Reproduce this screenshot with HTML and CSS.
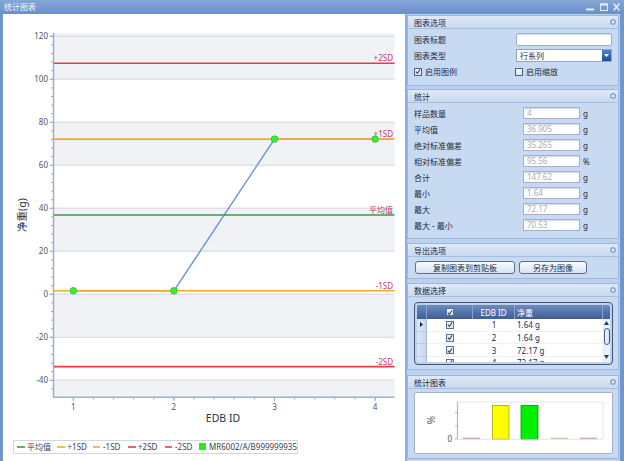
FILE: index.html
```html
<!DOCTYPE html>
<html lang="zh">
<head>
<meta charset="utf-8">
<title>统计图表</title>
<link rel="stylesheet" href="styles.css">
</head>
<body>
<div class="window">
  <div class="titlebar">
    <span class="title">统计图表</span>
    <svg class="winbtns" width="36" height="14" viewBox="0 0 36 14">
      <rect x="1" y="8.5" width="8" height="2" fill="#e4ebf6"/>
      <rect x="15.5" y="4" width="7" height="6.5" fill="none" stroke="#e4ebf6" stroke-width="1"/>
      <rect x="15" y="3.5" width="8" height="2" fill="#e4ebf6"/>
      <path d="M28.5 3.5 L34.5 10.5 M34.5 3.5 L28.5 10.5" stroke="#e4ebf6" stroke-width="1.6"/>
    </svg>
  </div>
  <div class="main">
    <div class="chart-pane">
      <svg class="chart" width="402" height="447" viewBox="3 14 402 447">
        <defs>
          <pattern id="ytick" patternUnits="userSpaceOnUse" x="0" y="35.8" width="10" height="8.6">
            <rect x="0" y="0" width="10" height="1" fill="#9ca8c0"/>
          </pattern>
          <pattern id="xtick" patternUnits="userSpaceOnUse" x="72.8" y="0" width="20.12" height="10">
            <rect x="0" y="0" width="1" height="10" fill="#9ca8c0"/>
          </pattern>
        </defs>
        <g fill="#f1f2f6">
          <rect x="54" y="33" width="340.5" height="46.3"/>
          <rect x="54" y="122.3" width="340.5" height="43"/>
          <rect x="54" y="208.3" width="340.5" height="43"/>
          <rect x="54" y="294.3" width="340.5" height="43"/>
          <rect x="54" y="380.3" width="340.5" height="16.7"/>
        </g>
        <g stroke="#dfe1e9" stroke-width="1.6">
          <line x1="54" y1="36.3" x2="394.5" y2="36.3"/>
          <line x1="54" y1="79.3" x2="394.5" y2="79.3"/>
          <line x1="54" y1="122.3" x2="394.5" y2="122.3"/>
          <line x1="54" y1="165.3" x2="394.5" y2="165.3"/>
          <line x1="54" y1="208.3" x2="394.5" y2="208.3"/>
          <line x1="54" y1="251.3" x2="394.5" y2="251.3"/>
          <line x1="54" y1="294.3" x2="394.5" y2="294.3"/>
          <line x1="54" y1="337.3" x2="394.5" y2="337.3"/>
          <line x1="54" y1="380.3" x2="394.5" y2="380.3"/>
        </g>
        <rect x="51" y="33" width="2" height="364" fill="url(#ytick)"/>
        <g stroke="#9ca8c0" stroke-width="1">
          <line x1="49.5" y1="36.3" x2="53" y2="36.3"/>
          <line x1="49.5" y1="79.3" x2="53" y2="79.3"/>
          <line x1="49.5" y1="122.3" x2="53" y2="122.3"/>
          <line x1="49.5" y1="165.3" x2="53" y2="165.3"/>
          <line x1="49.5" y1="208.3" x2="53" y2="208.3"/>
          <line x1="49.5" y1="251.3" x2="53" y2="251.3"/>
          <line x1="49.5" y1="294.3" x2="53" y2="294.3"/>
          <line x1="49.5" y1="337.3" x2="53" y2="337.3"/>
          <line x1="49.5" y1="380.3" x2="53" y2="380.3"/>
          <line x1="73.3" y1="397" x2="73.3" y2="401"/>
          <line x1="173.9" y1="397" x2="173.9" y2="401"/>
          <line x1="274.5" y1="397" x2="274.5" y2="401"/>
          <line x1="375.1" y1="397" x2="375.1" y2="401"/>
        </g>
        <rect x="54" y="397.5" width="340.5" height="2" fill="url(#xtick)"/>
        <line x1="53.5" y1="33" x2="53.5" y2="397.5" stroke="#a3afc6" stroke-width="1.5"/>
        <line x1="53" y1="397.2" x2="394.5" y2="397.2" stroke="#a3afc6" stroke-width="1.5"/>
        <g class="tick" text-anchor="end">
          <text x="48" y="39.3">120</text>
          <text x="48" y="82.3">100</text>
          <text x="48" y="125.3">80</text>
          <text x="48" y="168.3">60</text>
          <text x="48" y="211.3">40</text>
          <text x="48" y="254.3">20</text>
          <text x="48" y="297.3">0</text>
          <text x="48" y="340.3">-20</text>
          <text x="48" y="383.3">-40</text>
        </g>
        <g class="tick" text-anchor="middle">
          <text x="73.3" y="409.5">1</text>
          <text x="173.9" y="409.5">2</text>
          <text x="274.5" y="409.5">3</text>
          <text x="375.1" y="409.5">4</text>
        </g>
        <text class="axis-title" x="223" y="422" text-anchor="middle">EDB ID</text>
        <text class="axis-title" text-anchor="middle" transform="translate(25.5 215) rotate(-90)">净重(g)</text>

        <polyline points="73.3,290.8 173.9,290.8 274.5,139.1 375.1,139.1" fill="none" stroke="#7097cc" stroke-width="1.5"/>
        <line x1="54" y1="63.3" x2="394.5" y2="63.3" stroke="#ec3b3f" stroke-width="1.6"/>
        <line x1="54" y1="139.1" x2="394.5" y2="139.1" stroke="#f5a829" stroke-width="1.6"/>
        <line x1="54" y1="215" x2="394.5" y2="215" stroke="#3b9a3e" stroke-width="1.6"/>
        <line x1="54" y1="290.8" x2="394.5" y2="290.8" stroke="#f5a829" stroke-width="1.6"/>
        <line x1="54" y1="366.6" x2="394.5" y2="366.6" stroke="#ec3b3f" stroke-width="1.6"/>
        <g class="sdlabel" text-anchor="end">
          <text x="393" y="61">+2SD</text>
          <text x="393" y="137">+1SD</text>
          <text x="393" y="213">平均值</text>
          <text x="393" y="288.5">-1SD</text>
          <text x="393" y="364.5">-2SD</text>
        </g>
        <g fill="#3ded2e" stroke="#2cc01f" stroke-width="0.8">
          <circle cx="73.3" cy="290.8" r="3.3"/>
          <circle cx="173.9" cy="290.8" r="3.3"/>
          <circle cx="274.5" cy="139.1" r="3.3"/>
          <circle cx="375.1" cy="139.1" r="3.3"/>
        </g>

        <rect x="13.5" y="440.5" width="284" height="13" fill="#fff" stroke="#d3d6de"/>
        <g stroke-width="1.6">
          <line x1="17" y1="447" x2="25" y2="447" stroke="#3b9a3e"/>
          <line x1="57" y1="447" x2="65" y2="447" stroke="#f5a829"/>
          <line x1="93" y1="447" x2="100" y2="447" stroke="#f5a829"/>
          <line x1="128" y1="447" x2="136" y2="447" stroke="#ec3b3f"/>
          <line x1="165" y1="447" x2="172" y2="447" stroke="#ec3b3f"/>
        </g>
        <rect x="199" y="443" width="7" height="7" fill="#22ee11"/>
        <g class="legend">
          <text x="27" y="450">平均值</text>
          <text x="67.5" y="450">+1SD</text>
          <text x="103" y="450">-1SD</text>
          <text x="138" y="450">+2SD</text>
          <text x="175" y="450">-2SD</text>
          <text x="209" y="450">MR6002/A/B999999935</text>
        </g>
      </svg>
    </div>
    <div class="splitter"></div>
    <div class="side">
      <section class="sec s1">
        <div class="sec-head"><span>图表选项</span><span class="knob"></span></div>
        <div class="sec-body opts">
          <label class="lbl">图表标题</label>
          <div class="field"></div>
          <label class="lbl">图表类型</label>
          <div class="select"><span>行系列</span><span class="dd"><svg width="5" height="3" viewBox="0 0 5 3"><path d="M0 0 H5 L2.5 3 Z" fill="#fff"/></svg></span></div>
          <div class="chk"><span class="cb on"><svg width="7" height="7" viewBox="0 0 7 7"><path d="M1 3.6 L2.8 5.6 L6 1" fill="none" stroke="#2b4877" stroke-width="1.2"/></svg></span>启用图例</div>
          <div class="chk chk2"><span class="cb"></span>启用缩放</div>
        </div>
      </section>
      <section class="sec s2">
        <div class="sec-head"><span>统计</span><span class="knob"></span></div>
        <div class="sec-body stats">
          <span class="lbl">样品数量</span><span class="val">4</span><span class="unit">g</span>
          <span class="lbl">平均值</span><span class="val">36.905</span><span class="unit">g</span>
          <span class="lbl">绝对标准偏差</span><span class="val">35.265</span><span class="unit">g</span>
          <span class="lbl">相对标准偏差</span><span class="val">95.56</span><span class="unit">%</span>
          <span class="lbl">合计</span><span class="val">147.62</span><span class="unit">g</span>
          <span class="lbl">最小</span><span class="val">1.64</span><span class="unit">g</span>
          <span class="lbl">最大</span><span class="val">72.17</span><span class="unit">g</span>
          <span class="lbl">最大 - 最小</span><span class="val">70.53</span><span class="unit">g</span>
        </div>
      </section>
      <section class="sec s3">
        <div class="sec-head"><span>导出选项</span><span class="knob"></span></div>
        <div class="sec-body export">
          <button class="btn b1">复制图表到剪贴板</button>
          <button class="btn b2">另存为图像</button>
        </div>
      </section>
      <section class="sec s4">
        <div class="sec-head"><span>数据选择</span><span class="knob"></span></div>
        <div class="sec-body data">
          <div class="dgrid">
            <div class="dg-head">
              <div class="dh"></div>
              <div class="dh ctr"><span class="cb gcb"><svg width="7" height="7" viewBox="0 0 7 7"><path d="M1 3.6 L2.8 5.6 L6 1" fill="none" stroke="#2b4877" stroke-width="1.2"/></svg></span></div>
              <div class="dh ctr">EDB ID</div>
              <div class="dh left">净重</div>
              <div class="dh last"></div>
            </div>
            <div class="dg-body">
              <div class="rows">
                <div class="row">
                  <div class="rh"><svg width="3" height="5" viewBox="0 0 3 5"><path d="M0 0 L3 2.5 L0 5 Z" fill="#1b2233"/></svg></div>
                  <div class="cell ctr"><span class="cb gcb"><svg width="7" height="7" viewBox="0 0 7 7"><path d="M1 3.6 L2.8 5.6 L6 1" fill="none" stroke="#2b4877" stroke-width="1.2"/></svg></span></div>
                  <div class="cell ctr">1</div>
                  <div class="cell left">1.64 g</div>
                </div>
                <div class="row">
                  <div class="rh"></div>
                  <div class="cell ctr"><span class="cb gcb"><svg width="7" height="7" viewBox="0 0 7 7"><path d="M1 3.6 L2.8 5.6 L6 1" fill="none" stroke="#2b4877" stroke-width="1.2"/></svg></span></div>
                  <div class="cell ctr">2</div>
                  <div class="cell left">1.64 g</div>
                </div>
                <div class="row">
                  <div class="rh"></div>
                  <div class="cell ctr"><span class="cb gcb"><svg width="7" height="7" viewBox="0 0 7 7"><path d="M1 3.6 L2.8 5.6 L6 1" fill="none" stroke="#2b4877" stroke-width="1.2"/></svg></span></div>
                  <div class="cell ctr">3</div>
                  <div class="cell left">72.17 g</div>
                </div>
                <div class="row">
                  <div class="rh"></div>
                  <div class="cell ctr"><span class="cb gcb"><svg width="7" height="7" viewBox="0 0 7 7"><path d="M1 3.6 L2.8 5.6 L6 1" fill="none" stroke="#2b4877" stroke-width="1.2"/></svg></span></div>
                  <div class="cell ctr">4</div>
                  <div class="cell left">72.17 g</div>
                </div>
              </div>
              <div class="vscroll">
                <svg width="5" height="4" viewBox="0 0 5 4"><path d="M0 4 L2.5 0 L5 4 Z" fill="#1f3b6a"/></svg>
                <span class="thumb"></span>
                <svg width="5" height="4" viewBox="0 0 5 4"><path d="M0 0 H5 L2.5 4 Z" fill="#1f3b6a"/></svg>
              </div>
            </div>
          </div>
        </div>
      </section>
      <section class="sec s5">
        <div class="sec-head"><span>统计图表</span><span class="knob"></span></div>
        <div class="sec-body mini">
          <div class="minibox">
            <svg width="197" height="60" viewBox="1 1 197 60">
              <line x1="43" y1="10" x2="189" y2="10" stroke="#e1e4eb"/>
              <line x1="189" y1="10" x2="189" y2="47" stroke="#e1e4eb"/>
              <g fill="#d9a5a5">
                <rect x="48.7" y="45.6" width="17.3" height="1.6"/>
                <rect x="166" y="45.6" width="17" height="1.6"/>
              </g>
              <rect x="136.7" y="45.6" width="17.3" height="1.6" fill="#cfcf9c"/>
              <rect x="78.4" y="13.4" width="16.6" height="33.8" fill="#ffff00" stroke="#a8a800" stroke-width="0.8"/>
              <rect x="107" y="13.4" width="17" height="33.8" fill="#00ee00" stroke="#009a00" stroke-width="0.8"/>
              <line x1="43.5" y1="10" x2="43.5" y2="47.5" stroke="#a9b7cc" stroke-width="1.2"/>
              <line x1="43" y1="47.3" x2="189" y2="47.3" stroke="#d7dce6" stroke-width="0.8"/>
              <g stroke="#a9b7cc">
                <line x1="41" y1="20.7" x2="43" y2="20.7"/>
                <line x1="41" y1="34" x2="43" y2="34"/>
                <line x1="41" y1="47" x2="43" y2="47"/>
              </g>
              <text class="tick" x="38" y="49.8" text-anchor="end">0</text>
              <text class="pct" text-anchor="middle" transform="translate(21 28) rotate(-90)">%</text>
            </svg>
          </div>
        </div>
      </section>
    </div>
  </div>
</div>
</body>
</html>
```
FILE: styles.css
```css
* {
  box-sizing: border-box;
  margin: 0;
  padding: 0;
}

body {
  width: 624px;
  height: 461px;
  overflow: hidden;
  font-family: "Noto Sans", "Noto Sans CJK SC", sans-serif;
  font-size: 8px;
  color: #1c2a44;
}

.window {
  width: 624px;
  height: 461px;
  display: flex;
  flex-direction: column;
  background: #6f94cd;
}

.titlebar {
  height: 14px;
  flex: none;
  display: flex;
  align-items: center;
  justify-content: space-between;
  padding: 0 3px 0 4px;
  background: linear-gradient(#86a6d8, #6a8fca);
  color: #fff;
}

.title {
  font-size: 8px;
  line-height: 14px;
  color: #f4f7fc;
}

.winbtns {
  display: block;
}

.main {
  flex: 1;
  display: flex;
  border-left: 3px solid #7096ce;
  border-right: 4px solid #7096ce;
  min-height: 0;
}

.chart-pane {
  width: 402px;
  flex: none;
  background: #fff;
}

.chart {
  display: block;
}

.chart .tick {
  font-family: "Noto Sans", sans-serif;
  font-size: 8px;
  fill: #4e5366;
}

.chart .axis-title {
  font-family: "Noto Sans", "Noto Sans CJK SC", sans-serif;
  font-size: 10.5px;
  fill: #2e3344;
}

.chart .sdlabel {
  font-family: "Noto Sans", "Noto Sans CJK SC", sans-serif;
  font-size: 8px;
  fill: #c4405e;
}

.chart .legend {
  font-family: "Noto Sans", "Noto Sans CJK SC", sans-serif;
  font-size: 8px;
  fill: #3a3f4c;
}

.splitter {
  width: 2px;
  flex: none;
  background: #8fb0df;
}

.side {
  width: 213px;
  flex: none;
  background: #bcd1ee;
  padding-right: 1px;
  display: flex;
  flex-direction: column;
}

.sec {
  border: 1px solid #9cb6de;
  background: #c8daf2;
  display: flex;
  flex-direction: column;
}

.sec-head {
  height: 13px;
  flex: none;
  border-bottom: 1px solid #a6bee2;
  background: linear-gradient(#dfe9f8, #c9d9f0);
  display: flex;
  align-items: center;
  justify-content: space-between;
  padding: 0 2px 0 6px;
  color: #1a2946;
  font-size: 8px;
}

.knob {
  width: 6px;
  height: 6px;
  border-radius: 50%;
  background: radial-gradient(circle, #e6edf7 0 30%, #8ea6c9 40%);
}

.sec-body {
  flex: 1;
}

.s1 { height: 71px; margin-top: 1px; }
.s2 { height: 150px; margin-top: 3px; }
.s3 { height: 36px; margin-top: 4px; }
.s4 { height: 87px; margin-top: 4px; }
.s5 { height: 84px; margin-top: 5px; }

/* options */
.opts {
  display: grid;
  grid-template-columns: 102px 96px;
  grid-auto-rows: 13px;
  row-gap: 3px;
  padding: 4px 6px 0 6px;
  align-items: center;
}

.opts > :nth-child(5),
.opts > :nth-child(6) {
  height: 11px;
}

.lbl {
  color: #1c2a44;
  white-space: nowrap;
}

.field {
  height: 13px;
  background: #fff;
  border: 1px solid #9cb0cf;
  border-radius: 2px;
  box-shadow: inset 0 1px 1px #d6dde8;
}

.select {
  height: 13px;
  background: #fff;
  border: 1px solid #8fa6c8;
  display: flex;
  align-items: center;
  justify-content: space-between;
  padding-left: 3px;
  color: #1c2a44;
}

.dd {
  width: 9px;
  height: 11px;
  background: linear-gradient(#4f80c6, #1f4e98);
  display: flex;
  align-items: center;
  justify-content: center;
}

.dd svg {
  display: block;
}

.chk {
  display: flex;
  align-items: center;
  gap: 3px;
}

.chk2 {
  margin-left: -1px;
}

.cb {
  width: 8px;
  height: 8px;
  flex: none;
  border: 1px solid #45618c;
  background: linear-gradient(#f6f8fb, #dfe5ee);
  display: flex;
  align-items: center;
  justify-content: center;
}

.cb svg {
  display: block;
}

/* stats */
.stats {
  display: grid;
  grid-template-columns: 109px 57px 20px;
  grid-auto-rows: 12px;
  row-gap: 4px;
  padding: 4px 0 0 6px;
  align-items: center;
}

.val {
  height: 12px;
  background: #fff;
  border: 1px solid #9fb3cf;
  box-shadow: inset 0 1px 1px #d3dae6;
  color: #a9abb0;
  padding-left: 3px;
  line-height: 10px;
  font-size: 8px;
}

.unit {
  padding-left: 3px;
  color: #1c2a44;
}

/* export */
.export {
  display: flex;
  gap: 4px;
  padding: 4px 0 0 7px;
}

.btn {
  height: 13px;
  border: 1px solid #5a6f8e;
  border-radius: 3px;
  background: linear-gradient(#f8fafd, #d9e4f2);
  font-family: inherit;
  font-size: 8px;
  color: #1a2a44;
  line-height: 11px;
}

.b1 { width: 100px; }
.b2 { width: 68px; }

/* data grid */
.data {
  padding: 5px 0 0 6px;
}

.dgrid {
  width: 199px;
  height: 63px;
  border: 1px solid #43567a;
  border-radius: 4px;
  padding: 2px;
  background: #bfd1eb;
  display: flex;
  flex-direction: column;
  overflow: hidden;
}

.dg-head {
  height: 14px;
  flex: none;
  display: grid;
  grid-template-columns: 10px 46px 42px 88px 7px;
  background: linear-gradient(#6c8cbf, #3d5d94);
  color: #fff;
  border-radius: 2px 2px 0 0;
}

.dh {
  border-right: 1px solid #8aa3cc;
  display: flex;
  align-items: center;
  font-size: 8px;
}

.dh.last {
  border-right: none;
}

.ctr {
  justify-content: center;
}

.left {
  padding-left: 2px;
}

.dg-body {
  flex: 1;
  display: flex;
  overflow: hidden;
  background: #fff;
}

.rows {
  width: 186px;
  flex: none;
}

.row {
  display: grid;
  grid-template-columns: 10px 46px 42px 88px;
  height: 12.7px;
}

.rh {
  background: linear-gradient(90deg, #dbe5f3, #c9d8ee);
  border-right: 1px solid #a5b8d5;
  border-bottom: 1px solid #b9c9e0;
  display: flex;
  align-items: center;
  justify-content: center;
}

.rh svg {
  display: block;
}

.cell {
  display: flex;
  align-items: center;
  background: #fff;
  color: #1c2a44;
  border-bottom: 1px solid #f0f2f6;
  font-size: 8px;
}

.gcb {
  width: 8px;
  height: 8px;
  border-color: #5a7298;
}

.vscroll {
  width: 7px;
  flex: none;
  background: linear-gradient(90deg, #e6ecf5, #f4f7fb);
  display: flex;
  flex-direction: column;
  align-items: center;
  justify-content: space-between;
  padding: 2px 0 3px;
}

.vscroll svg {
  display: block;
}

.thumb {
  width: 6px;
  height: 17px;
  border: 1px solid #3e5a86;
  border-radius: 3px;
  background: linear-gradient(90deg, #f3f6fb, #d2deef);
  margin-top: -8px;
}

/* mini chart */
.mini {
  padding: 3px 0 0 6px;
}

.minibox {
  width: 199px;
  height: 62px;
  border: 1px solid #a2b3cc;
  border-radius: 2px;
  background: #fff;
}

.minibox svg {
  display: block;
}

.minibox .tick {
  font-family: "Noto Sans", sans-serif;
  font-size: 8px;
  fill: #4e5366;
}

.minibox .pct {
  font-family: "Noto Sans", sans-serif;
  font-size: 10px;
  fill: #555a66;
}
```
